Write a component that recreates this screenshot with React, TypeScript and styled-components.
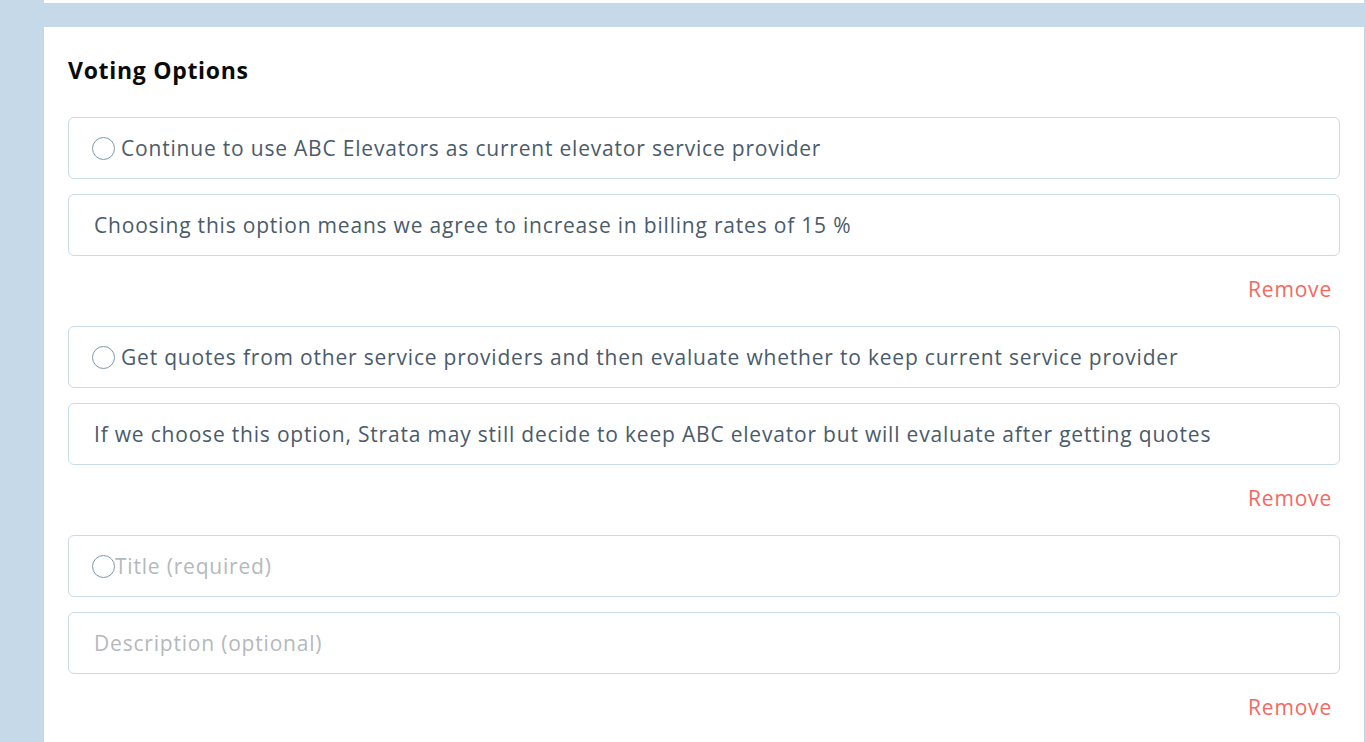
import React from 'react';
import styled, { createGlobalStyle } from 'styled-components';

const GlobalStyle = createGlobalStyle`
    html, body {
        margin: 0;
        padding: 0;
        background: #c6d9e8;
        font-family: "Open Sans", Lato, sans-serif;
    }
`

const Page = styled.div`
    height: 742px;
    overflow: hidden;
    padding-left: 44px;
    padding-right: 2px;
    display: flex;
    flex-direction: column;
    gap: 24px;
`

const TopStrip = styled.div`
    height: 3px;
    flex-shrink: 0;
    background: #ffffff;
`

const Card = styled.section`
    flex: 1;
    background: #ffffff;
    padding: 25px 24px 0 24px;
`

const Heading = styled.h2`
    margin: 0 0 29px 0;
    font-size: 23px;
    font-weight: 700;
    letter-spacing: 0.7px;
    color: #0a0a0a;
    line-height: 36px;
`

const Fields = styled.div`
    display: flex;
    flex-direction: column;
    gap: 15px;
`

const Field = styled.div<{ $pad: number }>`
    height: 60px;
    border: 1px solid #c9dbea;
    border-radius: 6px;
    display: flex;
    align-items: center;
    padding-left: ${p => p.$pad}px;
    font-size: 21px;
    letter-spacing: 0.8px;
    white-space: nowrap;
    color: ${p => (p.color ? p.color : '#4a5b6b')};
`

const Radio = styled.span<{ $gap: number }>`
    width: 21px;
    height: 21px;
    border: 1px solid #7c99ab;
    border-radius: 50%;
    margin-right: ${p => p.$gap}px;
    flex-shrink: 0;
`

const RemoveRow = styled.div`
    height: 66px;
    padding-bottom: 4px;
    display: flex;
    align-items: center;
    justify-content: flex-end;
    padding-right: 8px;
`

const RemoveLink = styled.span`
    color: #f8675e;
    font-size: 21px;
    letter-spacing: 0.8px;
    cursor: pointer;
`

type Option = { title: string; description: string }

const options: Option[] = [
    {
        title: 'Continue to use ABC Elevators as current elevator service provider',
        description: 'Choosing this option means we agree to increase in billing rates of 15 %',
    },
    {
        title: 'Get quotes from other service providers and then evaluate whether to keep current service provider',
        description: 'If we choose this option, Strata may still decide to keep ABC elevator but will evaluate after getting quotes',
    },
    { title: '', description: '' },
]

export default function App() {
    return (
        <>
            <GlobalStyle />
            <Page>
                <TopStrip />
                <Card>
                    <Heading>Voting Options</Heading>
                    {options.map((o, i) => (
                        <div key={i}>
                            <Fields>
                                <Field $pad={23} color={o.title ? undefined : '#b4b9bd'}>
                                    <Radio $gap={o.title ? 6 : 0} />
                                    {o.title || 'Title (required)'}
                                </Field>
                                <Field $pad={25} color={o.description ? undefined : '#b4b9bd'}>
                                    {o.description || 'Description (optional)'}
                                </Field>
                            </Fields>
                            <RemoveRow>
                                <RemoveLink>Remove</RemoveLink>
                            </RemoveRow>
                        </div>
                    ))}
                </Card>
            </Page>
        </>
    )
}
